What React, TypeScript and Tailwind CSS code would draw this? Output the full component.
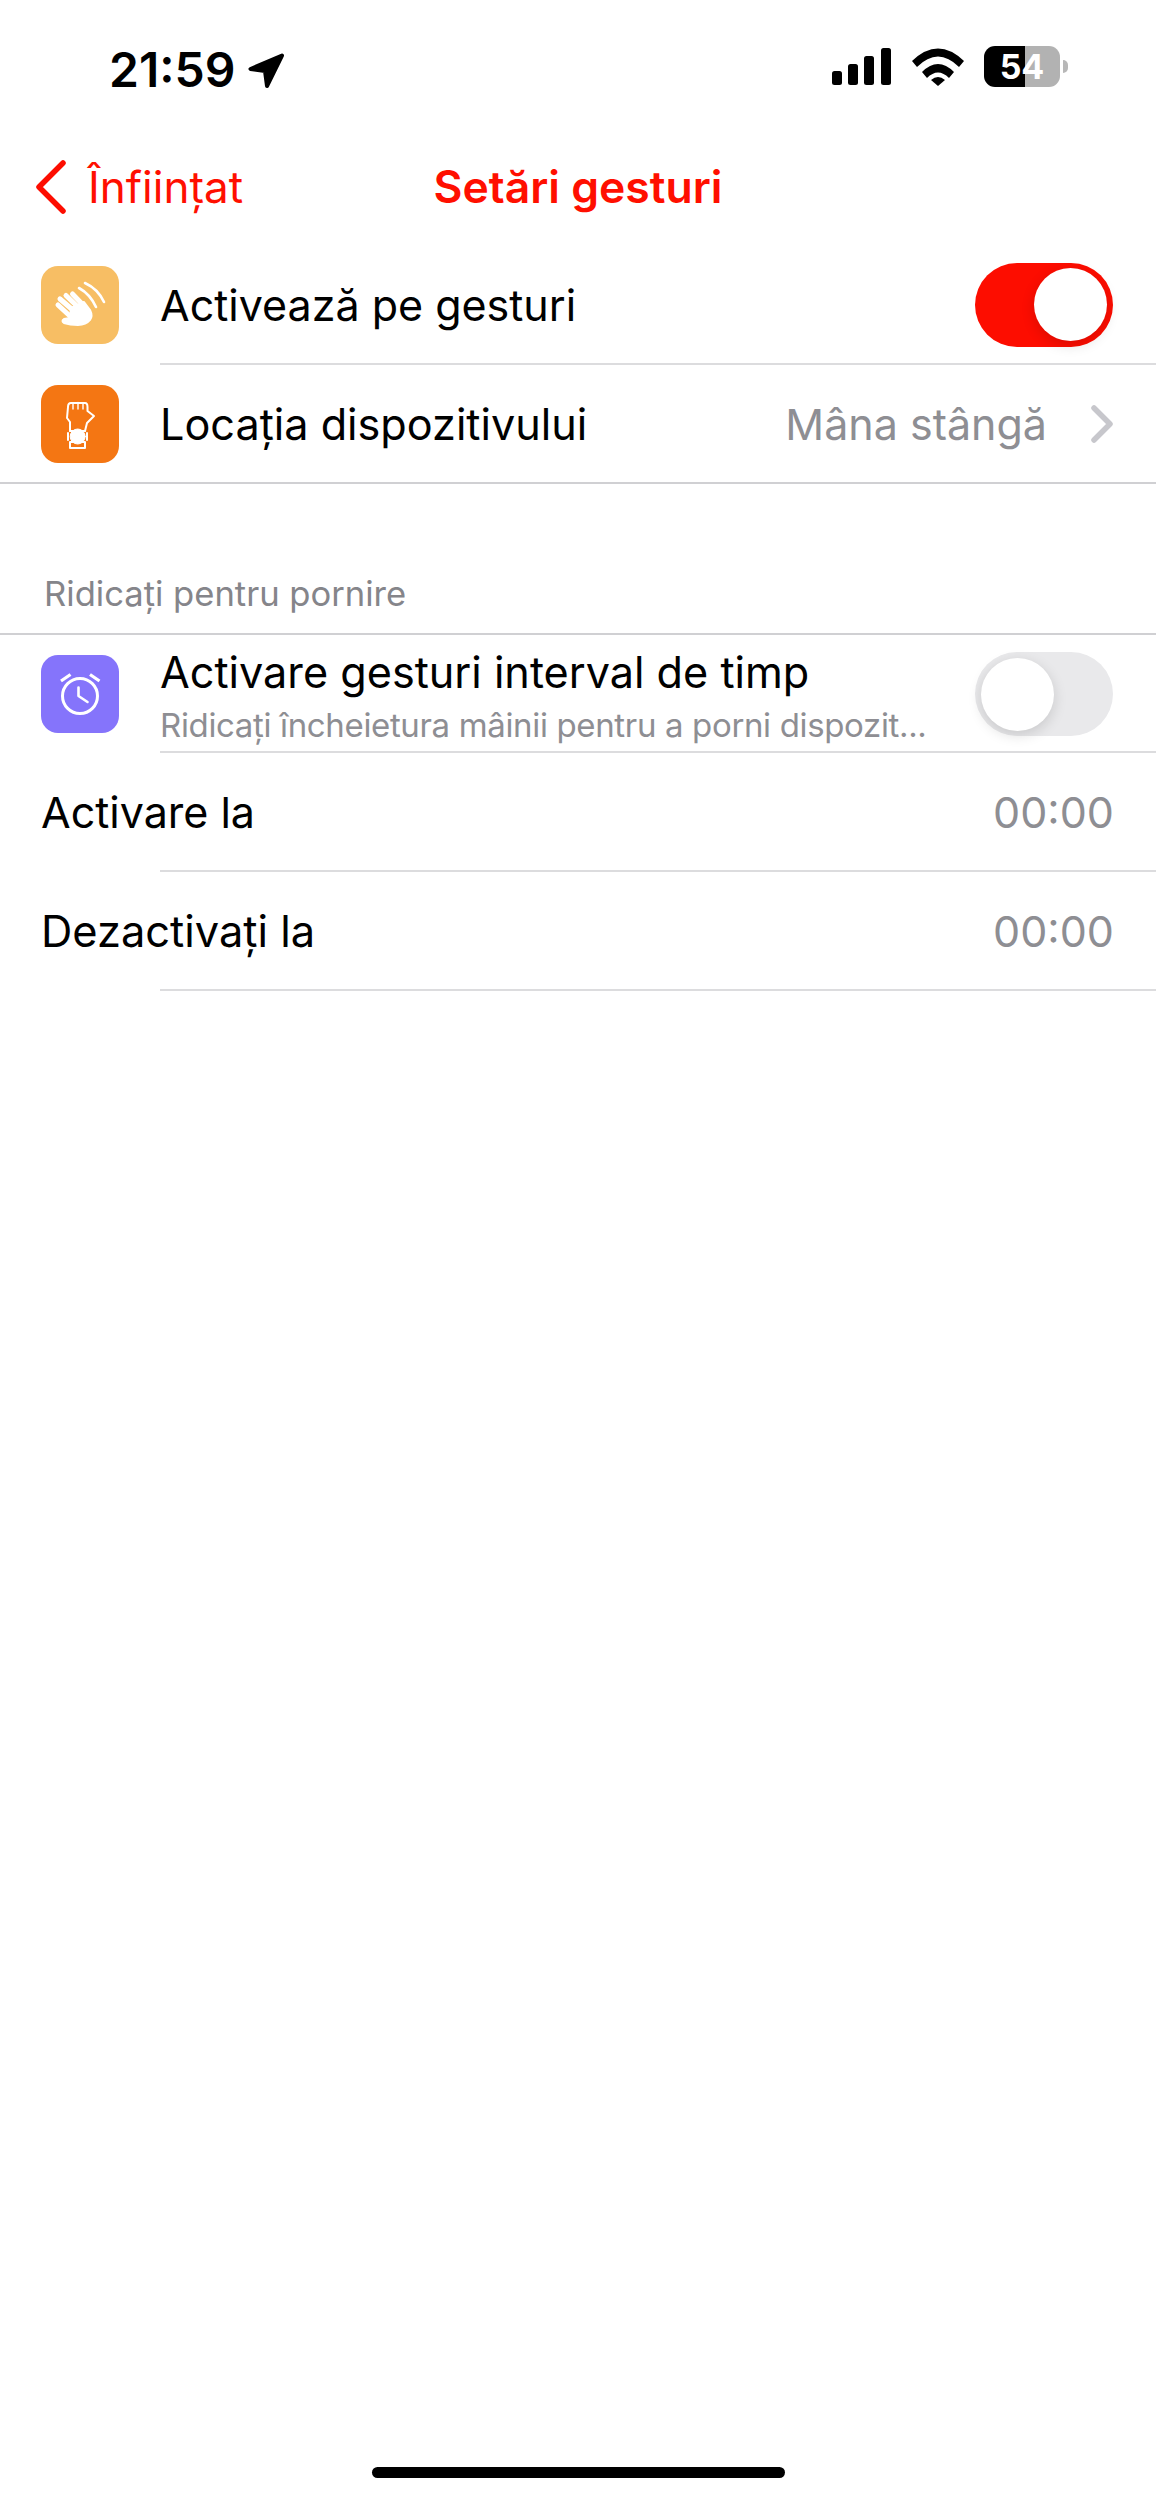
const RED = "text-[#ff0f00]";

function Toggle({ on }: { on: boolean }) {
  return (
    <div
      className={`flex h-[84px] w-[138px] items-center rounded-full p-[6px] ${
        on ? "justify-end bg-[#fd0d00]" : "justify-start bg-[#e9e9eb]"
      }`}
    >
      <div className="h-[73px] w-[73px] rounded-full bg-white shadow-[0_4px_14px_rgba(0,0,0,0.14)]" />
    </div>
  );
}

function Separator({ full = false }: { full?: boolean }) {
  return full ? <div className="h-[2px] bg-[#d0d0d3]" /> : <div className="ml-[160px] h-[2px] bg-[#dcdcde]" />;
}

function IconBox({ color, children }: { color: string; children: React.ReactNode }) {
  return (
    <div className={`h-[78px] w-[78px] shrink-0 rounded-[17px] ${color}`}>
      <svg viewBox="0 0 78 78" className="h-[78px] w-[78px]" fill="none" stroke="white" strokeLinecap="round" strokeLinejoin="round">
        {children}
      </svg>
    </div>
  );
}

function WaveIcon() {
  return (
    <IconBox color="bg-[#f7be64]">
      <g strokeWidth="5">
        <path d="M17 39 L30 51" />
        <path d="M19 33 L33 45" />
        <path d="M25 29.5 L38 42" />
        <path d="M31.5 28 L43 40" />
      </g>
      <path
        d="M30 42 L43 36 L49 44 Q52 50 49 54 Q45 59 37 59 Q29 59 23 57 Q20 55 23 53 L29 52 Z"
        fill="white"
        stroke="white"
        strokeWidth="2"
      />
      <path d="M38 22 Q49 28 55 41" strokeWidth="2.6" />
      <path d="M44 17 Q57 23 63 36" strokeWidth="2.6" />
    </IconBox>
  );
}

function WristIcon() {
  return (
    <IconBox color="bg-[#f47613]">
      <path
        d="M29 46 L29 37 L26 33 L27 22 Q27 18 30 18 L44 18 Q46.5 18 46.5 22 L46.5 26 L53 31 L46 38 L44 46"
        strokeWidth="2"
      />
      <path d="M32 24 L32 18.5 M37 24 L37 17.5 M42 24 L42 18" strokeWidth="1.4" />
      <path d="M29 46 L44 46 M29 57 L44 57 M29 57 L29 63 L44 63 L44 57" strokeWidth="2" />
      <path d="M27 48 L27 55 M46 48 L46 55" strokeWidth="2" />
      <circle cx="36.7" cy="51.5" r="7.5" fill="white" stroke="white" strokeWidth="1" />
    </IconBox>
  );
}

function AlarmIcon() {
  return (
    <IconBox color="bg-[#8574fb]">
      <circle cx="39" cy="41" r="17.5" strokeWidth="3" />
      <path d="M20 26 L29.5 19.5 M49 19.5 L58.5 26" strokeWidth="3.2" strokeLinecap="butt" />
      <path d="M37.5 32.5 L37.5 41 L46.5 47" strokeWidth="2.6" />
    </IconBox>
  );
}

function StatusBar() {
  return (
    <div className="flex h-[125px] items-start justify-between pt-[44px]">
      <div className="ml-[109px] flex items-center gap-[12px]">
        <span className="text-[48px] font-semibold leading-[52px] text-black">21:59</span>
        <svg viewBox="0 0 38 37" className="h-[37px] w-[38px]" fill="black" stroke="black" strokeWidth="4" strokeLinejoin="round">
          <path d="M35 3.5 L3.5 17 L18 19 L20 34 Z" />
        </svg>
      </div>
      <div className="mr-[88px] mt-[2px] flex items-center">
        <svg viewBox="0 0 60 38" className="h-[38px] w-[60px]" fill="black">
          <rect x="0" y="23" width="10" height="14" rx="2.5" />
          <rect x="16" y="16" width="10" height="21" rx="2.5" />
          <rect x="32" y="8" width="10" height="29" rx="2.5" />
          <rect x="49" y="0" width="10" height="37" rx="2.5" />
        </svg>
        <svg viewBox="0 0 52 38" className="ml-[20px] h-[38px] w-[52px]" fill="black">
          <path d="M0 13 Q26 -12 52 13 L47 19 Q26 -2 5 19 Z" />
          <path d="M10 24 Q26 8 42 24 L37 30 Q26 19 15 30 Z" />
          <path d="M19 32 Q26 26 33 32 L26 38 Z" />
        </svg>
        <div className="ml-[20px] flex h-[41px] w-[76px] items-center justify-center rounded-[11px] bg-[linear-gradient(90deg,#000_0,#000_54%,#b2b2b2_54%,#b2b2b2_100%)] font-['Inter',sans-serif] text-[34px] font-bold leading-none text-white">
          54
        </div>
        <div className="ml-[3px] h-[13px] w-[5px] rounded-r-full bg-[#b8b8b8]" />
      </div>
    </div>
  );
}

function NavBar() {
  return (
    <div className="grid h-[121px] grid-cols-[1fr_auto_1fr] items-start pt-[32px]">
      <div className="ml-[36px] flex items-center gap-[22px]">
        <svg viewBox="0 0 30 54" className="h-[54px] w-[30px]" fill="none" stroke="#fd0d00" strokeWidth="5.5" strokeLinecap="round" strokeLinejoin="round">
          <path d="M27 3 L3 27 L27 51" />
        </svg>
        <span className={`text-[44px] leading-[60px] ${RED}`}>Înființat</span>
      </div>
      <span className={`text-[44.5px] font-semibold leading-[60px] ${RED}`}>Setări gesturi</span>
      <div />
    </div>
  );
}

export default function App() {
  return (
    <div className="flex min-h-[2500px] w-[1156px] flex-col bg-white font-['Inter',sans-serif] text-[43px] text-black">
      <StatusBar />
      <NavBar />

      <div className="flex h-[117px] items-center pl-[41px] pr-[43px]">
        <WaveIcon />
        <span className="ml-[41px] flex-1 pt-[2px]">Activează pe gesturi</span>
        <Toggle on />
      </div>
      <Separator />
      <div className="flex h-[117px] items-center pl-[41px] pr-[43px]">
        <WristIcon />
        <span className="ml-[41px] flex-1 pt-[2px] text-[43.2px]">Locația dispozitivului</span>
        <span className="pt-[2px] text-[#8e8e93]">Mâna stângă</span>
        <svg viewBox="0 0 22 38" className="ml-[44px] h-[38px] w-[22px]" fill="none" stroke="#c7c7cc" strokeWidth="5.5" strokeLinecap="round" strokeLinejoin="round">
          <path d="M3 3 L19 19 L3 35" />
        </svg>
      </div>
      <Separator full />

      <div className="flex h-[149px] items-end pb-[18px] pl-[44px] text-[34.6px] leading-[44px] text-[#85858a]">Ridicați pentru pornire</div>
      <Separator full />

      <div className="flex h-[116px] items-center pl-[41px] pr-[43px] pt-[2px]">
        <AlarmIcon />
        <div className="ml-[41px] flex flex-col pt-[4px]">
          <span className="text-[43.2px] leading-[52px]">Activare gesturi interval de timp</span>
          <span className="mt-[5px] whitespace-nowrap text-[33px] leading-[44px] tracking-[-0.35px] text-[#8e8e93]">
            Ridicați încheietura mâinii pentru a porni dispozit...
          </span>
        </div>
        <div className="flex-1" />
        <Toggle on={false} />
      </div>
      <Separator />
      <div className="flex h-[117px] items-center justify-between pl-[41px] pr-[42px] pt-[2px]">
        <span>Activare la</span>
        <span className="text-[#8e8e93]">00:00</span>
      </div>
      <Separator />
      <div className="flex h-[117px] items-center justify-between pl-[41px] pr-[42px] pt-[2px]">
        <span className="text-[43.4px]">Dezactivați la</span>
        <span className="text-[#8e8e93]">00:00</span>
      </div>
      <Separator />

      <div className="mt-auto flex justify-center pb-[22px]">
        <div className="h-[11px] w-[413px] rounded-full bg-black" />
      </div>
    </div>
  );
}
